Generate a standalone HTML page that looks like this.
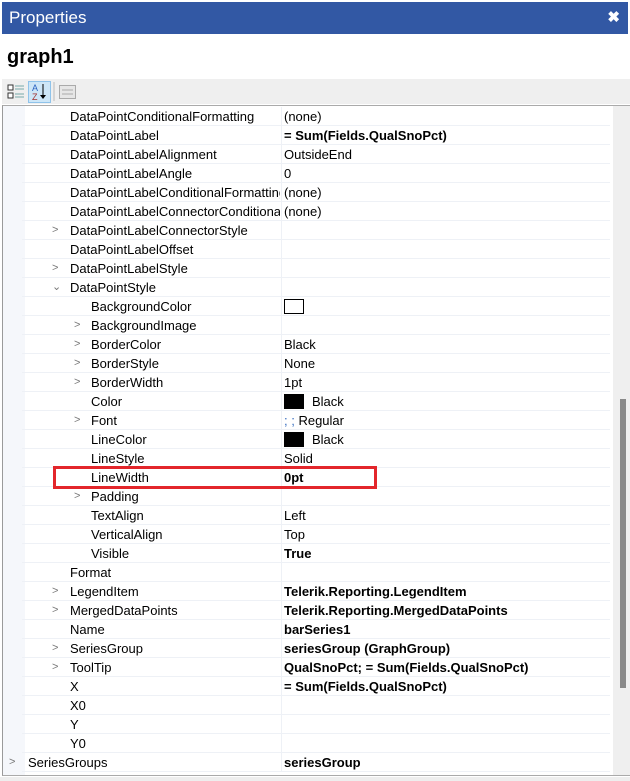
<!DOCTYPE html>
<html><head><meta charset="utf-8"><style>
*{margin:0;padding:0;box-sizing:border-box}
body{width:630px;height:781px;background:#fff;font-family:"Liberation Sans",Arial,sans-serif;position:relative;overflow:hidden;color:#000}
.title{position:absolute;left:2px;top:2px;width:626px;height:32px;background:#3258a4;color:#fff;font-size:17px;line-height:32px;padding-left:7px}
.x{position:absolute;right:8px;top:0;font-size:15px;font-weight:bold}
.h{position:absolute;left:7px;top:46px;font-size:20px;font-weight:bold}
.tb{position:absolute;left:2px;top:79px;width:628px;height:25px;background:#efefef}
.grid{position:absolute;left:2px;top:105px;width:628px;height:671px;border-left:1px solid #9a9a9a;border-top:1px solid #aaa;border-bottom:1px solid #aaa}
.gut{position:absolute;left:0;top:0;width:22px;height:100%;background:#f5f7fb}
.sb{position:absolute;left:610px;top:0;width:18px;height:100%;background:#efefef}
.th{position:absolute;left:617px;top:293px;width:6px;height:289px;background:#898989}
.row{position:absolute;left:22px;width:588px;height:19px;border-bottom:1px solid #eef1f6;font-size:13px;line-height:19px}
.n{position:absolute;white-space:nowrap;overflow:hidden}
.v{position:absolute;left:259px;width:329px;height:19px;border-left:1px solid #eef1f6;padding-left:2px;white-space:nowrap}
.b{font-weight:bold}
.a{position:absolute;color:#777;font-size:11px}
.sw{display:inline-block;width:20px;height:15px;background:#000;vertical-align:-3px;margin-right:8px}
.red{position:absolute;left:53px;top:466px;width:324px;height:23px;border:3px solid #e3262b}
.bot{position:absolute;left:0;top:777px;width:630px;height:4px;background:#eee}
</style></head><body>
<div class="title">Properties<span class="x">✖</span></div>
<div class="h">graph1</div>
<div class="tb">
<svg width="80" height="25" style="position:absolute;left:0;top:0">
<rect x="6" y="6" width="5" height="5" fill="#fff" stroke="#333"/><rect x="6" y="14" width="5" height="5" fill="#fff" stroke="#333"/>
<line x1="13" y1="7" x2="22" y2="7" stroke="#7aa"/><line x1="13" y1="10" x2="22" y2="10" stroke="#7aa"/><line x1="13" y1="15" x2="22" y2="15" stroke="#7aa"/><line x1="13" y1="18" x2="22" y2="18" stroke="#7aa"/>
<rect x="26.5" y="2.5" width="22" height="21" fill="#cde6f7" stroke="#8fc3ea"/>
<text x="30" y="12" font-size="9" fill="#2a62c0" font-family="Liberation Sans">A</text><text x="30" y="21" font-size="9" fill="#a03030" font-family="Liberation Sans">Z</text>
<line x1="41" y1="5" x2="41" y2="19" stroke="#000"/><path d="M38 16 L41 20 L44 16" fill="#000"/>
<line x1="52" y1="3" x2="52" y2="22" stroke="#bbb"/>
<rect x="57.5" y="6.5" width="16" height="13" fill="#e6e6e6" stroke="#aaa"/><line x1="60" y1="11" x2="71" y2="11" stroke="#aaa"/><line x1="60" y1="15" x2="71" y2="15" stroke="#aaa"/>
</svg></div>
<div class="grid">
<div class="gut"></div>
<div class="sb"></div><div class="th"></div>
</div>
<div id="rows"></div>
<div class="red"></div>
<div class="bot"></div>
<script>
var R=[
[1,0,"DataPointConditionalFormatting","(none)"],
[1,0,"DataPointLabel","= Sum(Fields.QualSnoPct)",1],
[1,0,"DataPointLabelAlignment","OutsideEnd"],
[1,0,"DataPointLabelAngle","0"],
[1,0,"DataPointLabelConditionalFormatting","(none)"],
[1,0,"DataPointLabelConnectorConditionalFormatting","(none)"],
[1,">","DataPointLabelConnectorStyle",""],
[1,0,"DataPointLabelOffset",""],
[1,">","DataPointLabelStyle",""],
[1,"v","DataPointStyle",""],
[2,0,"BackgroundColor","<span style='display:inline-block;width:20px;height:15px;border:1px solid #000;vertical-align:-3px'></span>"],
[2,">","BackgroundImage",""],
[2,">","BorderColor","Black"],
[2,">","BorderStyle","None"],
[2,">","BorderWidth","1pt"],
[2,0,"Color","<span class='sw'></span>Black"],
[2,">","Font","<span style='color:#3a6fc0'>; ;</span> Regular"],
[2,0,"LineColor","<span class='sw'></span>Black"],
[2,0,"LineStyle","Solid"],
[2,0,"LineWidth","0pt",1],
[2,">","Padding",""],
[2,0,"TextAlign","Left"],
[2,0,"VerticalAlign","Top"],
[2,0,"Visible","True",1],
[1,0,"Format",""],
[1,">","LegendItem","Telerik.Reporting.LegendItem",1],
[1,">","MergedDataPoints","Telerik.Reporting.MergedDataPoints",1],
[1,0,"Name","barSeries1",1],
[1,">","SeriesGroup","seriesGroup (GraphGroup)",1],
[1,">","ToolTip","QualSnoPct; = Sum(Fields.QualSnoPct)",1],
[1,0,"X","= Sum(Fields.QualSnoPct)",1],
[1,0,"X0",""],
[1,0,"Y",""],
[1,0,"Y0",""],
[0,">","SeriesGroups","seriesGroup",1]];
var h="";
var tx=[28,70,91],ax=[9,52,74];
R.forEach(function(r,i){
var top=107+19*i;
h+="<div class='row' style='top:"+top+"px'>";
var nx=tx[r[0]]-22;
if(r[1]){h+="<span class='a' style='left:"+(ax[r[0]]-22)+"px;top:0'>"+(r[1]=="v"?"&#8964;":"&gt;")+"</span>";}
h+="<span class='n' style='left:"+nx+"px;width:"+(258-nx)+"px'>"+r[2]+"</span>";
h+="<span class='v"+(r[4]?" b":"")+"'>"+r[3]+"</span></div>";
});
document.getElementById("rows").innerHTML=h;
</script>
</body></html>
